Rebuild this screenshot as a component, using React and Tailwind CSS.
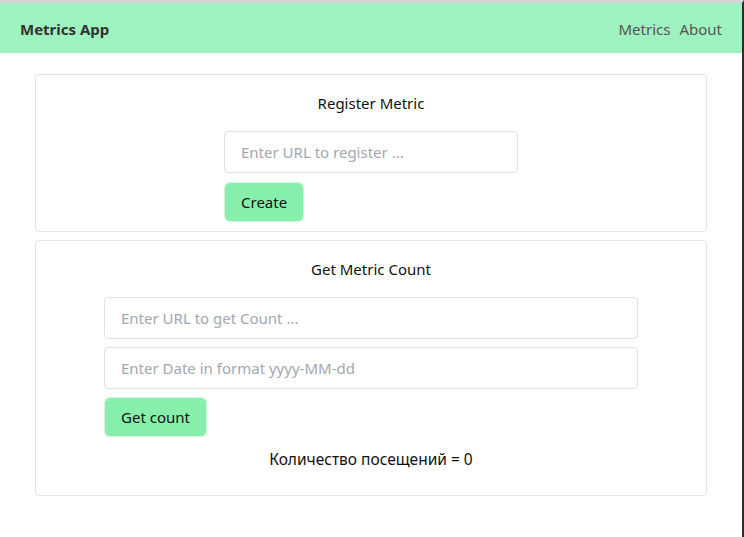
import { useState } from "react";

const font = { fontFamily: '"Noto Sans", "Open Sans", sans-serif' };

const Input = ({ placeholder, value, onChange, className = "" }) => (
  <input
    value={value}
    onChange={onChange}
    placeholder={placeholder}
    className={`block h-[42px] rounded-[4px] border border-[#e2e2e2] bg-white px-4 text-[15px] text-[#222] outline-none placeholder:text-[#a3a7b0] ${className}`}
  />
);

const GreenButton = ({ children, onClick }) => (
  <button
    onClick={onClick}
    className="h-[40px] rounded-[6px] border border-[#d6f5e0] bg-[#86efac] px-4 text-[15px] text-[#111]"
  >
    {children}
  </button>
);

export default function App() {
  const [url, setUrl] = useState("");
  const [countUrl, setCountUrl] = useState("");
  const [date, setDate] = useState("");
  const [count] = useState(0);

  return (
    <div
      style={font}
      className="flex min-h-screen flex-col border-t-[3px] border-r-2 border-t-[#d4d4d4] border-r-[#2d2d2d] bg-white"
    >
      {/* navbar */}
      <nav className="flex h-[50px] items-center justify-between bg-[#9df2c0] pt-[2px] pl-5 pr-[20px]">
        <span className="text-[15px] font-bold text-[#333]">Metrics App</span>
        <div className="flex gap-[9px] text-[15px] text-[#555]">
          <a>Metrics</a>
          <a>About</a>
        </div>
      </nav>

      <div className="flex flex-col gap-2 px-[35px] pt-[21px]">
        {/* register */}
        <div className="flex flex-col items-center rounded-[4px] border border-[#e4e4e4] pt-4 pb-[9px]">
          <div className="h-6 text-[15px] leading-6 text-[#111]">Register Metric</div>
          <div className="mt-4 flex w-[294px] flex-col items-start gap-[9px]">
            <Input
              className="w-full"
              placeholder="Enter URL to register ..."
              value={url}
              onChange={(e) => setUrl(e.target.value)}
            />
            <GreenButton>Create</GreenButton>
          </div>
        </div>

        {/* count */}
        <div className="flex flex-col items-center rounded-[4px] border border-[#e4e4e4] pt-4 pb-[24px]">
          <div className="h-6 text-[15px] leading-6 text-[#111]">Get Metric Count</div>
          <div className="mt-4 flex w-[534px] flex-col items-start gap-2">
            <Input
              className="w-full"
              placeholder="Enter URL to get Count ..."
              value={countUrl}
              onChange={(e) => setCountUrl(e.target.value)}
            />
            <Input
              className="w-full"
              placeholder="Enter Date in format yyyy-MM-dd"
              value={date}
              onChange={(e) => setDate(e.target.value)}
            />
            <GreenButton>Get count</GreenButton>
          </div>
          <div className="mt-[10px] h-6 text-[15.5px] leading-6 text-[#111]">
            Количество посещений = {count}
          </div>
        </div>
      </div>
    </div>
  );
}
